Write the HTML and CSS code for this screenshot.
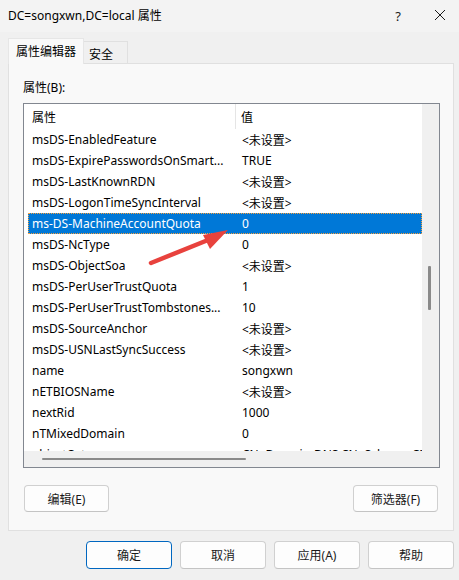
FILE: index.html
```html
<!DOCTYPE html>
<html lang="zh-CN">
<head>
<meta charset="utf-8">
<title>DC=songxwn,DC=local 属性</title>
<link rel="stylesheet" href="styles.css">
</head>
<body>
<div class="window">
  <div class="titlebar">
    <span class="title">DC=songxwn,DC=local 属性</span>
    <span class="help">?</span>
    <span class="close"><svg width="12" height="12" viewBox="0 0 12 12"><path d="M1 1L11 11M11 1L1 11" stroke="#1a1a1a" stroke-width="1" fill="none"/></svg></span>
  </div>
  <div class="tabs">
    <div class="tab active">属性编辑器</div>
    <div class="tab">安全</div>
  </div>
  <div class="panel">
    <div class="label">属性(B):</div>
    <div class="listbox">
      <div class="view">
        <div class="header">
          <div class="hcell hname">属性</div>
          <div class="hcell hvalue">值</div>
        </div>
        <div class="rows">
          <div class="row"><span class="name">msDS-EnabledFeature</span><span class="value">&lt;未设置&gt;</span></div>
          <div class="row"><span class="name">msDS-ExpirePasswordsOnSmart...</span><span class="value">TRUE</span></div>
          <div class="row"><span class="name">msDS-LastKnownRDN</span><span class="value">&lt;未设置&gt;</span></div>
          <div class="row"><span class="name">msDS-LogonTimeSyncInterval</span><span class="value">&lt;未设置&gt;</span></div>
          <div class="row selected"><span class="name">ms-DS-MachineAccountQuota</span><span class="value">0</span></div>
          <div class="row"><span class="name">msDS-NcType</span><span class="value">0</span></div>
          <div class="row"><span class="name">msDS-ObjectSoa</span><span class="value">&lt;未设置&gt;</span></div>
          <div class="row"><span class="name">msDS-PerUserTrustQuota</span><span class="value">1</span></div>
          <div class="row"><span class="name">msDS-PerUserTrustTombstones...</span><span class="value">10</span></div>
          <div class="row"><span class="name">msDS-SourceAnchor</span><span class="value">&lt;未设置&gt;</span></div>
          <div class="row"><span class="name">msDS-USNLastSyncSuccess</span><span class="value">&lt;未设置&gt;</span></div>
          <div class="row"><span class="name">name</span><span class="value">songxwn</span></div>
          <div class="row"><span class="name">nETBIOSName</span><span class="value">&lt;未设置&gt;</span></div>
          <div class="row"><span class="name">nextRid</span><span class="value">1000</span></div>
          <div class="row"><span class="name">nTMixedDomain</span><span class="value">0</span></div>
          <div class="row"><span class="name">objectCategory</span><span class="value">CN=Domain-DNS,CN=Schema,CN=Configuration,DC=songxwn,DC=local</span></div>
        </div>
      </div>
      <div class="vscroll"><div class="vthumb"></div></div>
      <div class="hscroll"><div class="hthumb"></div></div>
      <div class="corner"></div>
    </div>
    <div class="panel-buttons">
      <button class="btn">编辑(E)</button>
      <button class="btn">筛选器(F)</button>
    </div>
  </div>
  <div class="footer">
    <button class="btn big default">确定</button>
    <button class="btn big">取消</button>
    <button class="btn big">应用(A)</button>
    <button class="btn big">帮助</button>
  </div>
  <svg class="arrow" width="459" height="580" viewBox="0 0 459 580">
    <path d="M151 263 L213 238" stroke="#e8423d" stroke-width="4.5" stroke-linecap="round" fill="none"/>
    <path d="M228 230 L203 235 L210 249 Z" fill="#e8423d"/>
  </svg>
</div>
</body>
</html>
```
FILE: styles.css
```css
* { box-sizing: border-box; }
html, body { margin: 0; padding: 0; }
body {
  width: 459px;
  height: 580px;
  overflow: hidden;
  background: #f0f0f0;
  font-family: "Noto Sans", "Noto Sans CJK SC", sans-serif;
  font-size: 12px;
  color: #000;
}
.window {
  position: relative;
  width: 459px;
  height: 580px;
  background: #f0f0f0;
}
.titlebar {
  height: 32px;
  display: flex;
  align-items: center;
  padding-left: 8px;
  background: #f3f3f3;
}
.title { flex: 1; font-size: 12px; padding-bottom: 2px; }
.help {
  width: 20px;
  text-align: center;
  font-size: 13px;
  margin-right: 26px;
  color: #1a1a1a;
}
.close {
  width: 12px;
  height: 12px;
  display: flex;
  margin-right: 13px;
  margin-bottom: 2px;
}
.tabs {
  display: flex;
  align-items: flex-end;
  height: 31px;
  padding-left: 8px;
  position: relative;
  z-index: 2;
}
.tab {
  height: 22px;
  padding: 0 14px 0 5px;
  border: 1px solid #e0e0e0;
  border-bottom: none;
  border-left: none;
  background: #f0f0f0;
  display: flex;
  align-items: center;
  padding-top: 2px;
}
.tab.active {
  height: 26px;
  margin-bottom: -1px;
  padding: 0 7px 2px 7px;
  background: #f9f9f9;
  border: 1px solid #e6e6e6;
  border-bottom: none;
}
.panel {
  margin-left: 8px;
  width: 446px;
  height: 468px;
  background: #f9f9f9;
  border: 1px solid #e0e0e0;
  padding: 16px 13px 0 14px;
  display: flex;
  flex-direction: column;
}
.label { height: 16px; line-height: 16px; margin-bottom: 7px; }
.listbox {
  width: 417px;
  height: 365px;
  border: 1px solid #828790;
  background: #fff;
  display: grid;
  grid-template-columns: 398px 17px;
  grid-template-rows: 347px 16px;
}
.view { overflow: hidden; background: #fff; }
.header { display: flex; height: 25px; }
.hcell { display: flex; align-items: center; height: 25px; }
.hname { width: 212px; padding-left: 8px; border-right: 1px solid #e5e5e5; }
.hvalue { padding-left: 5px; }
.rows { padding-left: 4px; }
.row {
  display: flex;
  height: 21px;
  align-items: center;
  white-space: nowrap;
}
.name { width: 208px; padding-left: 4px; flex-shrink: 0; overflow: hidden; }
.value { padding-left: 6px; }
.row.selected {
  background: #0078d7;
  color: #fff;
  outline: 1px dotted #f7a03c;
  outline-offset: -1px;
}
.vscroll {
  background: #f0f0f0;
  grid-row: 1;
  grid-column: 2;
  position: relative;
}
.vthumb {
  position: absolute;
  left: 6px;
  top: 162px;
  width: 3px;
  height: 44px;
  background: #8a8a8a;
  border-radius: 1px;
}
.hscroll {
  background: #f0f0f0;
  grid-row: 2;
  grid-column: 1;
  position: relative;
}
.hthumb {
  position: absolute;
  left: 18px;
  top: 7px;
  width: 204px;
  height: 2px;
  background: #8a8a8a;
  border-radius: 1px;
}
.corner { background: #f0f0f0; grid-row: 2; grid-column: 2; }
.panel-buttons {
  display: flex;
  justify-content: space-between;
  margin-top: 17px;
  padding: 0 2px 0 1px;
}
.btn {
  width: 85px;
  height: 27px;
  border: 1px solid #d0d0d0;
  border-bottom-color: #c4c4c4;
  border-radius: 4px;
  background: #fdfdfd;
  font-family: "Noto Sans", "Noto Sans CJK SC", sans-serif;
  font-size: 12px;
  color: #1a1a1a;
  padding: 0;
}
.footer {
  display: flex;
  gap: 8px;
  padding-left: 86px;
  margin-top: 10px;
}
.btn.big { width: 86px; height: 28px; }
.btn.default { border: 1px solid #0067c0; }
.arrow {
  position: absolute;
  left: 0;
  top: 0;
  pointer-events: none;
}
```
